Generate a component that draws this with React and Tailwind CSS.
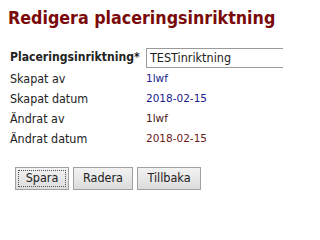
export default function App() {
  const rows = [
    { label: 'Skapat av', value: '1lwf', color: 'text-[#1a1a8c]' },
    { label: 'Skapat datum', value: '2018-02-15', color: 'text-[#1a1a8c]' },
    { label: 'Ändrat av', value: '1lwf', color: 'text-[#4a1414]' },
    { label: 'Ändrat datum', value: '2018-02-15', color: 'text-[#6b1a1a]' },
  ];

  return (
    <div className="h-[209px] w-[283px] overflow-hidden bg-white font-['DejaVu_Sans_Condensed','DejaVu_Sans',sans-serif] text-[#222]">
      <h1 className="whitespace-nowrap pl-[8px] pt-[8px] text-[17.7px] font-bold leading-[20px] text-[#7a0a0a]">Redigera placeringsinriktning</h1>

      <div className="mt-[19px] pl-[10px]">
        <div className="flex h-[21px] items-center">
          <div className="w-[136px] shrink-0 whitespace-nowrap text-[12.1px] font-bold">Placeringsinriktning*</div>
          <input
            readOnly
            value="TESTinriktning"
            className="h-[20px] w-[160px] shrink-0 border border-[#9a9a9a] px-[3px] text-[12.5px] text-[#222] outline-none"
          />
        </div>
        <div className="pt-[1px]">
          {rows.map(r => (
            <div key={r.label} className="flex h-[20px] items-center">
              <div className="w-[136px] shrink-0 text-[12.4px]">{r.label}</div>
              <div className={`font-['DejaVu_Sans',sans-serif] text-[10.5px] ${r.color}`}>{r.value}</div>
            </div>
          ))}
        </div>
      </div>

      <div className="mt-[18px] flex gap-[4px] pl-[15px]">
        <button className="h-[23px] w-[54px] border border-[#a0a0a0] bg-gradient-to-b from-[#f2f2f2] to-[#dcdcdc] p-[2px] text-[12.5px] text-[#222]">
          <span className="flex h-full w-full items-center justify-center border border-dotted border-[#555]">Spara</span>
        </button>
        <button className="h-[23px] w-[60px] border border-[#a0a0a0] bg-gradient-to-b from-[#f2f2f2] to-[#dcdcdc] text-[12.5px] text-[#222]">Radera</button>
        <button className="h-[23px] w-[64px] border border-[#a0a0a0] bg-gradient-to-b from-[#f2f2f2] to-[#dcdcdc] text-[12.5px] text-[#222]">Tillbaka</button>
      </div>
    </div>
  );
}
